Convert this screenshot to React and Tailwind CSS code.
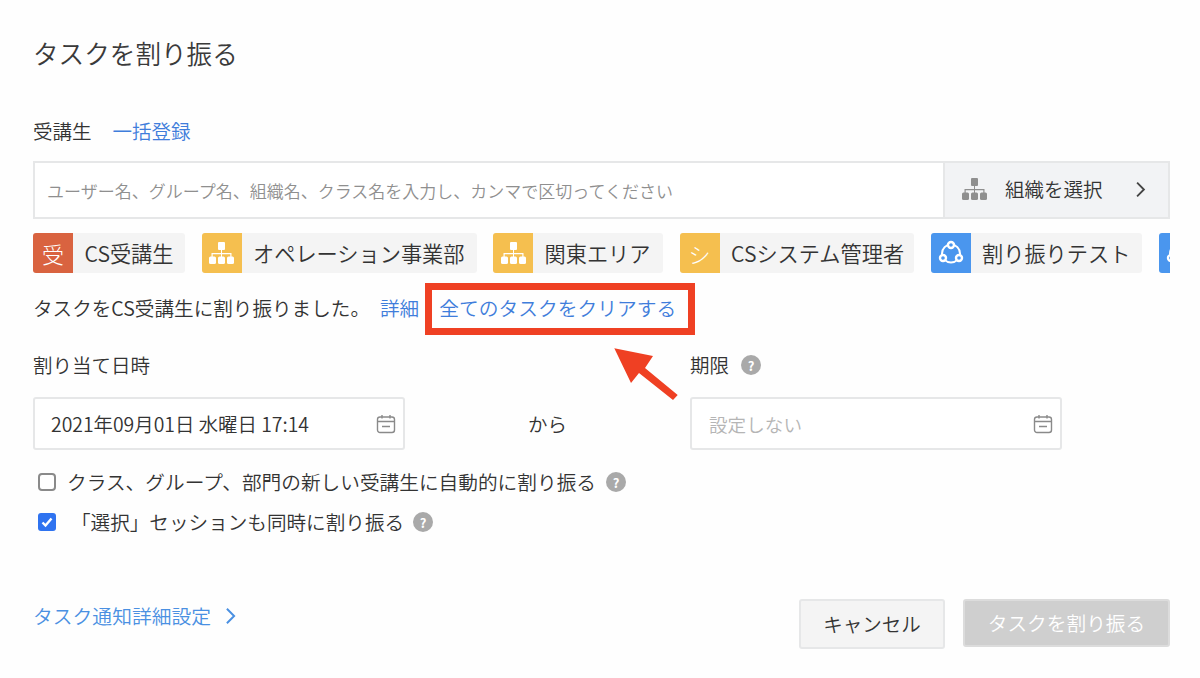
const font = { fontFamily: '"Noto Sans CJK JP", "Noto Sans", sans-serif' };

function OrgIcon({ className, fill = "white" }) {
  return (
    <svg viewBox="0 0 25 22" className={className} fill={fill}>
      <rect x="9" y="0" width="7" height="8" rx="1" />
      <path d="M12 8h1v3h9.5v4h-1.2v-2.8H13V15h-1v-2.8H3.7V15H2.5v-4H12z" />
      <rect x="0" y="14.5" width="7" height="7.5" rx="1.5" />
      <rect x="9" y="14.5" width="7" height="7.5" rx="1.5" />
      <rect x="18" y="14.5" width="7" height="7.5" rx="1.5" />
    </svg>
  );
}

function ShareIcon({ className }) {
  return (
    <svg viewBox="0 0 26 26" className={className} fill="none" stroke="white" strokeWidth="2">
      <circle cx="13" cy="13.5" r="9" />
      <circle cx="13" cy="5" r="3" fill="#4a96ee" strokeWidth="2.4" />
      <circle cx="5" cy="18" r="3" fill="#4a96ee" strokeWidth="2.4" />
      <circle cx="21" cy="18" r="3" fill="#4a96ee" strokeWidth="2.4" />
    </svg>
  );
}

function CalendarIcon() {
  return (
    <svg viewBox="0 0 20 20" className="w-[20px] h-[20px]" fill="none" stroke="#8a8a8a" strokeWidth="1.4">
      <rect x="1.5" y="3" width="17" height="15.5" rx="2.5" />
      <path d="M1.5 7.5h17M6 1v3.5M14 1v3.5M6 12.5h8" />
    </svg>
  );
}

function Help() {
  return (
    <span className="inline-flex w-[20px] h-[20px] rounded-full bg-[#a9a9a9] text-white text-[13px] font-bold items-center justify-center leading-none">?</span>
  );
}

function Chip({ icon, color, label, width }) {
  return (
    <div className={`flex shrink-0 h-[40px] rounded-[3px] overflow-hidden bg-[#f4f4f4] ${width}`}>
      <div className={`w-[40px] h-[40px] shrink-0 flex items-center justify-center text-white text-[22px] font-light ${color}`}>{icon}</div>
      <div className="pl-[11.5px] flex items-center text-[21.2px] leading-none text-[#333] whitespace-nowrap">{label}</div>
    </div>
  );
}

export default function App() {
  return (
    <div style={font} className="relative w-[1200px] h-[678px] overflow-hidden bg-[#fefefe] pl-[33px] pr-[30px] text-[#333] font-[350]">
      <h1 className="pt-[36px] text-[25.6px] leading-[34px] font-[350] text-[#3a3a3a]">タスクを割り振る</h1>

      <div className="mt-[47px] flex items-center h-[28px] text-[19.5px]">
        <span>受講生</span>
        <a className="ml-[21px] text-[#3f7ddb]">一括登録</a>
      </div>

      <div className="mt-[16px] flex h-[58px] border-2 border-[#e6e7e8] bg-white">
        <div className="flex-1 flex items-center pl-[12px] pt-[2px] text-[17px] text-[#8f8f8f] whitespace-nowrap">ユーザー名、グループ名、組織名、クラス名を入力し、カンマで区切ってください</div>
        <div className="w-[225px] flex items-center bg-[#f2f3f5] border-l-2 border-[#e6e7e8] pl-[17px] pr-[22px] pb-[2px] text-[19.5px]">
          <OrgIcon className="w-[25px] h-[22px]" fill="#8f8f8f" />
          <span className="ml-[18px] flex-1">組織を選択</span>
          <svg viewBox="0 0 12 20" className="w-[11px] h-[17px]" fill="none" stroke="#444" strokeWidth="2.2"><path d="M2 2l8 8-8 8" /></svg>
        </div>
      </div>

      <div className="mt-[14px] flex gap-[16.5px] overflow-hidden">
        <Chip width="w-[152px]" color="bg-[#d96340]" icon="受" label="CS受講生" />
        <Chip width="w-[275px]" color="bg-[#f5bf4f]" icon={<OrgIcon className="w-[25px] h-[22px]" />} label="オペレーション事業部" />
        <Chip width="w-[170px]" color="bg-[#f5bf4f]" icon={<OrgIcon className="w-[25px] h-[22px]" />} label="関東エリア" />
        <Chip width="w-[234.5px]" color="bg-[#f5bf4f]" icon="シ" label="CSシステム管理者" />
        <Chip width="w-[211.5px]" color="bg-[#4a96ee]" icon={<ShareIcon className="w-[26px] h-[26px]" />} label="割り振りテスト" />
        <div className="shrink-0 w-[40px] h-[40px] rounded-l-[3px] bg-[#4a96ee] flex items-center justify-center"><ShareIcon className="w-[26px] h-[26px]" /></div>
      </div>

      <div className="mt-[20px] flex items-center h-[30px] text-[19.6px] whitespace-nowrap">
        <span>タスクをCS受講生に割り振りました。</span>
        <a className="ml-[10px] text-[#3f7ddb]">詳細</a>
        <a className="ml-[20px] text-[19.75px] text-[#3f7ddb]">全てのタスクをクリアする</a>
      </div>

      <div className="mt-[27px] flex h-[30px] items-center text-[19.5px]">
        <span className="w-[657px]">割り当て日時</span>
        <span>期限</span>
        <span className="ml-[12px] flex"><Help /></span>
      </div>

      <div className="mt-[17px] flex items-center">
        <div className="w-[372px] h-[53px] flex items-center justify-between border-2 border-[#e6e7e8] rounded-[3px] pl-[16px] pr-[7px] bg-white text-[19.4px] whitespace-nowrap">
          <span>2021年09月01日 水曜日 17:14</span>
          <CalendarIcon />
        </div>
        <span className="w-[285px] text-center text-[19.5px]">から</span>
        <div className="w-[372px] h-[53px] flex items-center justify-between border-2 border-[#e6e7e8] rounded-[3px] pl-[17px] pr-[7px] bg-white text-[18.6px] text-[#b5b5b5]">
          <span>設定しない</span>
          <CalendarIcon />
        </div>
      </div>

      <div className="mt-[18px] flex items-center h-[28px] pl-[5px] text-[19.68px]">
        <span className="w-[18px] h-[18px] border-2 border-[#8a8a8a] rounded-[4px] bg-white" />
        <span className="ml-[11px]">クラス、グループ、部門の新しい受講生に自動的に割り振る</span>
        <span className="ml-[10px] flex"><Help /></span>
      </div>

      <div className="mt-[12px] flex items-center h-[28px] pl-[5px] text-[19.6px]">
        <span className="w-[18px] h-[18px] rounded-[3px] bg-[#2f73f0] flex items-center justify-center">
          <svg viewBox="0 0 14 14" className="w-[14px] h-[14px]" fill="none" stroke="white" strokeWidth="2.4"><path d="M2.5 7.5l3 3 6-7" /></svg>
        </span>
        <span className="ml-[15px]">「選択」セッションも同時に割り振る</span>
        <span className="ml-[9px] flex"><Help /></span>
      </div>

      <div className="mt-[63px] flex items-start justify-between">
        <div className="flex items-center h-[34px] text-[19.8px] text-[#4a90e2]">
          <span>タスク通知詳細設定</span>
          <svg viewBox="0 0 12 20" className="ml-[14px] w-[11px] h-[18px]" fill="none" stroke="#4a90e2" strokeWidth="2.2"><path d="M2 2l8 8-8 8" /></svg>
        </div>
        <div className="flex gap-[18px] items-start">
          <button className="w-[146px] h-[50px] border-2 border-[#e6e7e8] rounded-[3px] bg-[#f4f4f4] text-[19.5px] text-[#333]">キャンセル</button>
          <button className="w-[207px] h-[48px] rounded-[3px] bg-[#cfcfcf] text-[19.7px] text-white border-2 border-[#dcdcdc]">タスクを割り振る</button>
        </div>
      </div>

      <div className="absolute left-[425px] top-[283px] w-[270px] h-[52px] border-[7px] border-[#ef4023]" />
      <svg className="absolute left-[610px] top-[345px] w-[70px] h-[60px]" viewBox="0 0 70 60" fill="#ef4023">
        <path d="M4.3 3.3L43 11 35 23 67.7 50 63 55 29 28 21 38z" />
      </svg>
    </div>
  );
}
